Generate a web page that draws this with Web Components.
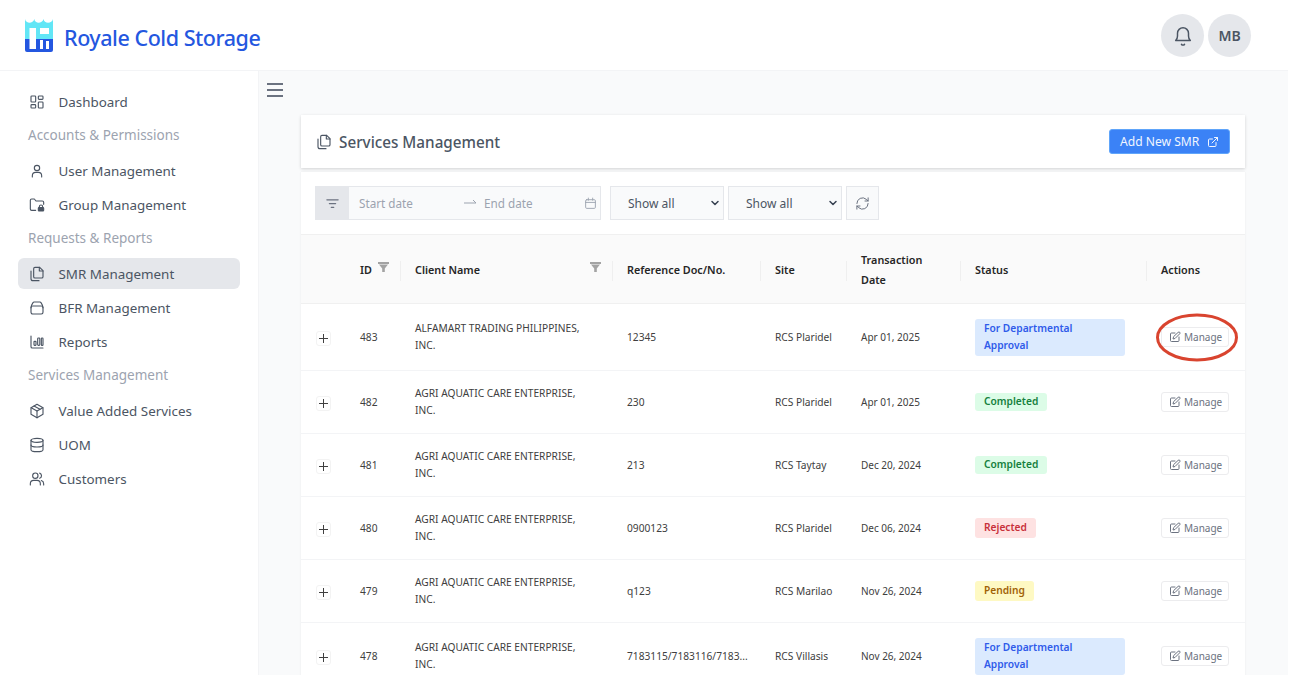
<!DOCTYPE html>
<html>
<head>
<meta charset="utf-8">
<title>Royale Cold Storage</title>
<style>
  html, body { margin: 0; padding: 0; background: #fff; overflow: hidden; }
  body { font-family: "Noto Sans", "Open Sans", sans-serif; color: #4b5563; }
</style>
</head>
<body>
<rcs-app>
  <rcs-header slot="header"></rcs-header>
  <side-nav slot="nav">
    <nav-item icon="dashboard">Dashboard</nav-item>
    <nav-label>Accounts &amp; Permissions</nav-label>
    <nav-item icon="user">User Management</nav-item>
    <nav-item icon="folder">Group Management</nav-item>
    <nav-label>Requests &amp; Reports</nav-label>
    <nav-item icon="files" active>SMR Management</nav-item>
    <nav-item icon="box">BFR Management</nav-item>
    <nav-item icon="chart">Reports</nav-item>
    <nav-label>Services Management</nav-label>
    <nav-item icon="cube">Value Added Services</nav-item>
    <nav-item icon="db">UOM</nav-item>
    <nav-item icon="users">Customers</nav-item>
  </side-nav>
  <page-title>Services Management</page-title>
  <smr-table>
    <filter-bar></filter-bar>
    <table-head></table-head>
    <smr-row num="483" client="ALFAMART TRADING PHILIPPINES, INC." ref="12345" site="RCS Plaridel" date="Apr 01, 2025" status="info" label="For Departmental Approval" style="height:67px" circled></smr-row>
    <smr-row num="482" client="AGRI AQUATIC CARE ENTERPRISE, INC." ref="230" site="RCS Plaridel" date="Apr 01, 2025" status="ok" label="Completed"></smr-row>
    <smr-row num="481" client="AGRI AQUATIC CARE ENTERPRISE, INC." ref="213" site="RCS Taytay" date="Dec 20, 2024" status="ok" label="Completed"></smr-row>
    <smr-row num="480" client="AGRI AQUATIC CARE ENTERPRISE, INC." ref="0900123" site="RCS Plaridel" date="Dec 06, 2024" status="bad" label="Rejected"></smr-row>
    <smr-row num="479" client="AGRI AQUATIC CARE ENTERPRISE, INC." ref="q123" site="RCS Marilao" date="Nov 26, 2024" status="wait" label="Pending"></smr-row>
    <smr-row num="478" client="AGRI AQUATIC CARE ENTERPRISE, INC." ref="7183115/7183116/7183..." site="RCS Villasis" date="Nov 26, 2024" status="info" label="For Departmental Approval" style="height:67px"></smr-row>
  </smr-table>
</rcs-app>

<script>
const ICONS = {
  dashboard: '<rect x="3" y="3" width="7" height="9" rx="1.2"/><rect x="14" y="3" width="7" height="5" rx="1.2"/><rect x="14" y="12" width="7" height="9" rx="1.2"/><rect x="3" y="16" width="7" height="5" rx="1.2"/>',
  user: '<circle cx="12" cy="7.5" r="4"/><path d="M5 21v-2a5 5 0 0 1 5-5h4a5 5 0 0 1 5 5v2"/>',
  folder: '<path d="M10 20H4a2 2 0 0 1-2-2V5a2 2 0 0 1 2-2h4l2.500 3H20a2 2 0 0 1 2 2v3"/><rect x="14" y="16" width="8" height="5" rx="1" fill="currentColor"/><path d="M15.500 16v-1.500a2.500 2.500 0 0 1 5 0V16"/>',
  files: '<path d="M9 2h7l5 5v9a2 2 0 0 1-2 2h-10a2 2 0 0 1-2-2V4a2 2 0 0 1 2-2z"/><path d="M15.500 2v5.500H21"/><path d="M3 7.500V19a3 3 0 0 0 3 3h9"/>',
  box: '<rect x="3" y="9" width="18" height="12" rx="2.500"/><path d="M3 11.500c0-2.500 1-4.500 3-7.500a2 2 0 0 1 1.600-1h8.800a2 2 0 0 1 1.600 1c2 3 3 5 3 7.500"/>',
  chart: '<path d="M3 3v16a2 2 0 0 0 2 2h16"/><rect x="7.500" y="11" width="3" height="6" rx=".8"/><rect x="13" y="6" width="3.200" height="11" rx="1.200"/><rect x="18.500" y="6" width="2.500" height="11" rx="1"/>',
  cube: '<path d="M12 2l9 5v10l-9 5-9-5V7z"/><path d="M3.300 7L12 12l8.700-5"/><path d="M12 22V12"/><path d="M7.500 4.500l9 5"/>',
  db: '<ellipse cx="12" cy="5" rx="9" ry="3"/><path d="M3 5v14c0 1.700 4 3 9 3s9-1.300 9-3V5"/><path d="M3 12c0 1.700 4 3 9 3s9-1.300 9-3"/>',
  users: '<circle cx="9.500" cy="7" r="4"/><path d="M2 21v-2a5 5 0 0 1 5-5h5a5 5 0 0 1 5 5v2"/><path d="M16 3.200a4 4 0 0 1 0 7.600"/><path d="M22 21v-2a5 5 0 0 0-3.500-4.700"/>'
};

function svg(body, size, sw) {
  return `<svg width="${size}" height="${size}" viewBox="0 0 24 24" fill="none" stroke="currentColor" stroke-width="${sw || 2}" stroke-linecap="round" stroke-linejoin="round">${body}</svg>`;
}

class RcsApp extends HTMLElement {
  constructor() {
    super();
    this.attachShadow({ mode: 'open' });
    this.shadowRoot.innerHTML = `
      <style>
        :host { display: flex; flex-direction: column; width: 1288px; height: 675px; overflow: hidden; background: #fff; }
        .body { display: flex; flex: 1; min-height: 0; }
        main { flex: 1; min-width: 0; background: #f9fafb; padding: 10px 43px 0 42px; overflow: hidden; }
        .burger { display: block; margin: 0 0 14px -35px; height: 20px; color: #6b7280; }
      </style>
      <slot name="header"></slot>
      <div class="body">
        <slot name="nav"></slot>
        <main>
          <div class="burger">
            <svg width="20" height="20" viewBox="0 0 20 20" fill="none" stroke="currentColor" stroke-width="1.800"><path d="M1 3h16M1 9h16M1 15h16"/></svg>
          </div>
          <slot></slot>
        </main>
      </div>`;
  }
}

class RcsHeader extends HTMLElement {
  constructor() {
    super();
    this.attachShadow({ mode: 'open' });
    this.shadowRoot.innerHTML = `
      <style>
        :host { display: flex; align-items: center; justify-content: space-between; height: 71px; box-sizing: border-box; padding: 0 37px 0 25px; background: #fff; border-bottom: 1px solid #f3f4f6; flex: none; }
        .brand { display: flex; align-items: center; gap: 11px; }
        .name { font-size: 21.500px; font-weight: 500; color: #2457e0; letter-spacing: -.46px; margin-top: 5px; }
        .right { display: flex; gap: 4px; margin-top: 1px; }
        .circle { width: 43px; height: 43px; border-radius: 50%; background: #e5e7eb; display: flex; align-items: center; justify-content: center; color: #4b5563; font-size: 14px; font-weight: 600; }
      </style>
      <div class="brand">
        <svg width="28" height="33" viewBox="0 0 28 33">
          <path d="M0 0C1 5 8 5 9.300 0 10 5 17 5 18.600 0 19 5 27 5 28 0V21H0z" fill="#62e6f6"/>
          <path d="M0 20h28v11a2 2 0 0 1-2 2H2a2 2 0 0 1-2-2z" fill="#2457e0"/>
          <path d="M4.500 9h6.500v21H4.500zM15 9h9v6h-9zM15 21h3v9h-3zM21 22h3v8h-3z" fill="#fff"/>
          <path d="M11 9h4v11h-4zM18 16h6v4h-6z" fill="#62e6f6"/>
        </svg>
        <span class="name">Royale Cold Storage</span>
      </div>
      <div class="right">
        <div class="circle">${svg('<path d="M10.300 21a2 2 0 0 0 3.400 0"/><path d="M4 17h16c-1.500-1.500-2-3-2-5V9a6 6 0 0 0-12 0v3c0 2-.5 3.500-2 5z"/>', 22, 1.600)}</div>
        <div class="circle">MB</div>
      </div>`;
  }
}

class SideNav extends HTMLElement {
  constructor() {
    super();
    this.attachShadow({ mode: 'open' });
    this.shadowRoot.innerHTML = `
      <style>
        :host { display: flex; flex-direction: column; gap: 3px; width: 259px; box-sizing: border-box; padding: 15px 18px 0 18px; background: #fff; border-right: 1px solid #f3f4f6; flex: none; }
      </style>
      <slot></slot>`;
  }
}

class NavItem extends HTMLElement {
  constructor() {
    super();
    this.attachShadow({ mode: 'open' });
  }
  connectedCallback() {
    this.shadowRoot.innerHTML = `
      <style>
        :host { display: flex; align-items: center; gap: 13.500px; height: 31px; padding-left: 11px; border-radius: 6px; font-size: 13.400px; color: #4b5563; }
        :host([active]) { background: #e5e7eb; }
        svg { flex: none; }
      </style>
      ${svg(ICONS[this.getAttribute('icon')], 16, 1.700)}
      <slot></slot>`;
  }
}

class NavLabel extends HTMLElement {
  constructor() {
    super();
    this.attachShadow({ mode: 'open' });
    this.shadowRoot.innerHTML = `
      <style>
        :host { display: block; height: 29px; line-height: 29px; padding: 1px 0 2px 10px; font-size: 13.500px; color: #9ca3af; }
      </style>
      <slot></slot>`;
  }
}

class PageTitle extends HTMLElement {
  constructor() {
    super();
    this.attachShadow({ mode: 'open' });
    this.shadowRoot.innerHTML = `
      <style>
        :host { display: flex; align-items: center; justify-content: space-between; height: 53px; box-sizing: border-box; padding: 0 15px; background: #fff; box-shadow: 0 1px 3px rgba(0,0,0,.16); }
        .t { display: flex; align-items: center; gap: 7px; font-size: 15.250px; font-weight: 500; color: #4b5563; }
        button { display: flex; align-items: center; gap: 8px; width: 121px; height: 25px; box-sizing: border-box; padding: 0 0 0 10px; border: 1px solid #60a5fa; border-radius: 3px; background: #3b82f6; color: #f1f6ff; font: inherit; font-size: 12.100px; }
      </style>
      <div class="t">${svg(ICONS.files, 16, 1.700)}<span><slot></slot></span></div>
      <button>Add New SMR ${svg('<path d="M18 13v6a2 2 0 0 1-2 2H5a2 2 0 0 1-2-2V8a2 2 0 0 1 2-2h6"/><path d="M15 3h6v6"/><path d="M10 14L21 3"/>', 12, 2)}</button>`;
  }
}

class SmrTable extends HTMLElement {
  constructor() {
    super();
    this.attachShadow({ mode: 'open' });
    this.shadowRoot.innerHTML = `
      <style>
        :host { display: block; position: relative; margin-top: 4px; background: #fff; box-shadow: 0 0 2px rgba(0,0,0,.07); }
      </style>
      <slot></slot>`;
  }
}

class FilterBar extends HTMLElement {
  constructor() {
    super();
    this.attachShadow({ mode: 'open' });
    this.shadowRoot.innerHTML = `
      <style>
        :host { display: flex; gap: 4px; height: 62px; box-sizing: border-box; padding: 14px; font-size: 12px; }
        .box { display: flex; align-items: center; height: 34px; box-sizing: border-box; background: #f9fafb; border: 1px solid #e5e7eb; color: #9ca3af; }
        .range { width: 286px; margin-right: 5px; font-size: 11.700px; }
        .icon { width: 33px; height: 100%; display: flex; align-items: center; justify-content: center; background: #e5e7eb; color: #6b7280; flex: none; }
        .start { width: 105px; margin-left: 10px; }
        .arrow { width: 20px; display: flex; }
        .end { margin-left: 0; width: 100px; }
        .sel { width: 114px; justify-content: space-between; padding: 0 2px 0 17px; color: #4b5563; }
        .refresh { width: 33px; justify-content: center; color: #6b7280; }
      </style>
      <div class="box range">
        <span class="icon">${svg('<path d="M3 6h18M7 12h10M10 18h4"/>', 15, 2)}</span>
        <span class="start">Start date</span>
        <span class="arrow"><svg width="13" height="8" viewBox="0 0 13 8" fill="none" stroke="#9ca3af" stroke-width="1"><path d="M0 4h12M9 1l3 3"/></svg></span>
        <span class="end">End date</span>
        ${svg('<rect x="3" y="5" width="18" height="16" rx="2"/><path d="M3 10h18M8 2v4M16 2v4"/>', 13, 1.700)}
      </div>
      <div class="box sel">Show all ${svg('<path d="M6 9l6 6 6-6"/>', 12, 3).replace('currentColor', '#374151')}</div>
      <div class="box sel">Show all ${svg('<path d="M6 9l6 6 6-6"/>', 12, 3).replace('currentColor', '#374151')}</div>
      <div class="box refresh">${svg('<path d="M3 12a9 9 0 0 1 15-6.700L21 8"/><path d="M21 3v5h-5"/><path d="M21 12a9 9 0 0 1-15 6.700L3 16"/><path d="M3 21v-5h5"/>', 15, 1.600)}</div>`;
  }
}

const GRID = '44px 55px 212px 148px 86px 114px 186px 99px';

class TableHead extends HTMLElement {
  constructor() {
    super();
    this.attachShadow({ mode: 'open' });
    const funnel = '<svg width="11" height="10" viewBox="0 0 11 10" fill="#a3a3a3"><path d="M0 0h11v2H0zM1 2.500h9L6.800 6.500V10H4.200V6.500z"/></svg>';
    this.shadowRoot.innerHTML = `
      <style>
        :host { display: grid; grid-template-columns: ${GRID}; height: 70px; box-sizing: border-box; padding-top: 1px; background: #fafafa; border-top: 1px solid #f0f0f0; border-bottom: 1px solid #f0f0f0; font-size: 10.800px; font-weight: 600; color: #262626; line-height: 20px; }
        div { display: flex; align-items: center; justify-content: space-between; padding: 0 11px 0 15px; position: relative; }
        div + div::before { content: ""; position: absolute; left: 0; top: 25px; height: 20px; width: 1px; background: #efefef; }
        svg { margin-top: -5px; }
        .first::before { display: none; }
        .short { width: 50px; display: block; padding: 0; }
      </style>
      <div class="first"></div>
      <div class="first"><span>ID</span>${funnel}</div>
      <div><span>Client Name</span>${funnel}</div>
      <div>Reference Doc/No.</div>
      <div>Site</div>
      <div><span class="short" style="position:static">Transaction Date</span></div>
      <div>Status</div>
      <div>Actions</div>`;
  }
}

class StatusBadge extends HTMLElement {
  constructor() {
    super();
    this.attachShadow({ mode: 'open' });
    this.shadowRoot.innerHTML = `
      <style>
        :host { display: inline-block; box-sizing: border-box; padding: 1px 9px; border-radius: 3px; font-size: 10.200px; font-weight: 600; line-height: 17.500px; }
        :host([type=info]) { display: block; width: 150px; background: #dbeafe; color: #2f5bea; }
        :host([type=ok]) { padding: 0 9px; background: #dcfce7; color: #15803d; }
        :host([type=bad]) { background: #fee2e2; color: #c8303a; }
        :host([type=wait]) { background: #fef9c3; color: #a16207; }
      </style>
      <slot></slot>`;
  }
}

class ManageButton extends HTMLElement {
  constructor() {
    super();
    this.attachShadow({ mode: 'open' });
    this.shadowRoot.innerHTML = `
      <style>
        :host { display: inline-flex; align-items: center; gap: 3px; width: 68px; height: 20px; box-sizing: border-box; padding-left: 7px; background: #fff; border: 1px solid #ececee; border-radius: 3px; font-size: 10px; color: #6b7280; }
      </style>
      ${svg('<path d="M12 4H5a2 2 0 0 0-2 2v13a2 2 0 0 0 2 2h13a2 2 0 0 0 2-2v-7"/><path d="M18.500 2.500a2.100 2.100 0 0 1 3 3L12 15l-4 1 1-4z"/>', 12, 2)}
      <slot></slot>`;
  }
}

class SmrRow extends HTMLElement {
  constructor() {
    super();
    this.attachShadow({ mode: 'open' });
  }
  connectedCallback() {
    const a = (k) => this.getAttribute(k);
    this.shadowRoot.innerHTML = `
      <style>
        :host { display: grid; grid-template-columns: ${GRID}; height: 63px; box-sizing: border-box; background: #fff; border-bottom: 1px solid #f3f4f6; font-size: 10.200px; line-height: 17px; color: #404040; position: relative; }
        .c { display: flex; align-items: center; padding: 0 15px; }
        .date { font-size: 10px; }
        .site { white-space: nowrap; padding-right: 0; }
        .plus { justify-content: center; padding: 2px 0 0 1px; }
        .plus span { width: 13px; height: 13px; border: 1px solid #f3f3f3; border-radius: 3px; display: flex; align-items: center; justify-content: center; }
        .client { padding-right: 27px; }
        .ring { position: absolute; left: 855px; top: 9px; pointer-events: none; }
      </style>
      <div class="c plus"><span><svg width="9" height="9" viewBox="0 0 9 9" stroke="#404040" stroke-width="1"><path d="M4.500 0v9M0 4.500h9"/></svg></span></div>
      <div class="c">${a('num')}</div>
      <div class="c client">${a('client')}</div>
      <div class="c">${a('ref')}</div>
      <div class="c site">${a('site')}</div>
      <div class="c date">${a('date')}</div>
      <div class="c"><status-badge type="${a('status')}">${a('label')}</status-badge></div>
      <div class="c"><manage-button>Manage</manage-button></div>
      ${this.hasAttribute('circled') ? '<svg class="ring" width="83" height="49" viewBox="0 0 83 49" fill="none"><ellipse cx="41" cy="24.500" rx="39.500" ry="22.500" stroke="#d9442f" stroke-width="3"/></svg>' : ''}`;
  }
}

customElements.define('rcs-app', RcsApp);
customElements.define('rcs-header', RcsHeader);
customElements.define('side-nav', SideNav);
customElements.define('nav-item', NavItem);
customElements.define('nav-label', NavLabel);
customElements.define('page-title', PageTitle);
customElements.define('smr-table', SmrTable);
customElements.define('filter-bar', FilterBar);
customElements.define('table-head', TableHead);
customElements.define('status-badge', StatusBadge);
customElements.define('manage-button', ManageButton);
customElements.define('smr-row', SmrRow);
</script>
</body>
</html>
